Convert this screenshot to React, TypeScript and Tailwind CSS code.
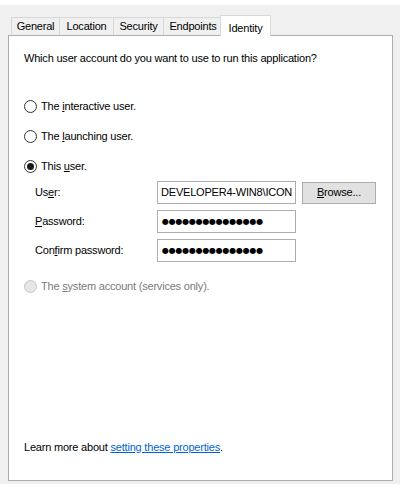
import React from "react";

const font = { fontFamily: '"Liberation Sans", Arial, sans-serif' };

function Radio({ checked, disabled }: { checked?: boolean; disabled?: boolean }) {
  return (
    <span
      className={
        "flex items-center justify-center w-[13px] h-[13px] rounded-full border shrink-0 " +
        (disabled ? "border-[#c8c8c8] bg-[#e6e6e6]" : "border-[#333333] bg-white")
      }
    >
      {checked && <span className="w-[7px] h-[7px] rounded-full bg-[#1a1a1a]" />}
    </span>
  );
}

function Tab({ label, w, first }: { label: string; w: string; first?: boolean }) {
  return (
    <div
      className={
        "h-[18px] border border-b-0 border-[#d9d9d9] bg-[#f0f0f0] flex items-center justify-center text-black " +
        w +
        (first ? "" : " -ml-px")
      }
    >
      {label}
    </div>
  );
}

const dots = "●●●●●●●●●●●●●●●";

export default function App() {
  return (
    <div className="w-[408px] h-[486px] bg-white text-[11px] tracking-[-0.2px] text-black" style={font}>
      <div className="mt-[5px] w-[400px] h-[479px] bg-[#f0f0f0] flex flex-col">
        {/* tabs */}
        <div className="flex items-end pl-[11px] mt-[9px] h-[21px] relative z-10">
          <Tab label="General" w="w-[49px]" first />
          <Tab label="Location" w="w-[55px]" />
          <Tab label="Security" w="w-[51px]" />
          <Tab label="Endpoints" w="w-[60px]" />
          <div className="ml-[-3px] w-[51px] h-[21px] -mb-px border border-b-0 border-[#d9d9d9] bg-white flex items-start justify-center pt-[4px]">
            Identity
          </div>
        </div>

        {/* panel */}
        <div className="ml-[8px] w-[385px] h-[446px] border border-[#adadad] bg-white flex flex-col px-[15px]">
          <div className="mt-[14px] leading-[16px]">
            Which user account do you want to use to run this application?
          </div>

          <div className="mt-[32px] flex flex-col gap-[14px]">
            <label className="flex items-center gap-[4px] h-[16px]">
              <Radio />
              <span>
                The <u>i</u>nteractive user.
              </span>
            </label>
            <label className="flex items-center gap-[4px] h-[16px]">
              <Radio />
              <span>
                The <u>l</u>aunching user.
              </span>
            </label>
            <label className="flex items-center gap-[4px] h-[16px]">
              <Radio checked />
              <span>
                This <u>u</u>ser.
              </span>
            </label>
          </div>

          <div className="mt-[7px] flex flex-col gap-[6px]">
            <div className="flex items-center">
              <span className="w-[133px] pl-[11px]">
                Us<u>e</u>r:
              </span>
              <div className="w-[139px] h-[23px] border border-[#abadb3] bg-white flex items-center pl-[3px] overflow-hidden whitespace-nowrap">
                DEVELOPER4-WIN8\ICON
              </div>
              <button className="ml-[6px] w-[74px] h-[22px] border border-[#adadad] bg-[#e1e1e1] flex items-center justify-center">
                <span>
                  <u>B</u>rowse...
                </span>
              </button>
            </div>
            <div className="flex items-center">
              <span className="w-[133px] pl-[11px]">
                <u>P</u>assword:
              </span>
              <div
                className="w-[139px] h-[23px] border border-[#abadb3] bg-white flex items-center pl-[4px] text-[8px] tracking-[-0.25px]"
                style={{ fontFamily: '"DejaVu Sans", sans-serif' }}
              >
                {dots}
              </div>
            </div>
            <div className="flex items-center">
              <span className="w-[133px] pl-[11px]">
                Con<u>f</u>irm password:
              </span>
              <div
                className="w-[139px] h-[23px] border border-[#abadb3] bg-white flex items-center pl-[4px] text-[8px] tracking-[-0.25px]"
                style={{ fontFamily: '"DejaVu Sans", sans-serif' }}
              >
                {dots}
              </div>
            </div>
          </div>

          <label className="mt-[16px] flex items-center gap-[4px] h-[16px] text-[#7a7a7a]">
            <Radio disabled />
            <span>
              The <u>s</u>ystem account (services only).
            </span>
          </label>

          <div className="mt-auto mb-[25px] leading-[16px]">
            Learn more about{" "}
            <a href="#" className="text-[#0066cc] underline">
              setting these properties
            </a>
            .
          </div>
        </div>
      </div>
    </div>
  );
}
